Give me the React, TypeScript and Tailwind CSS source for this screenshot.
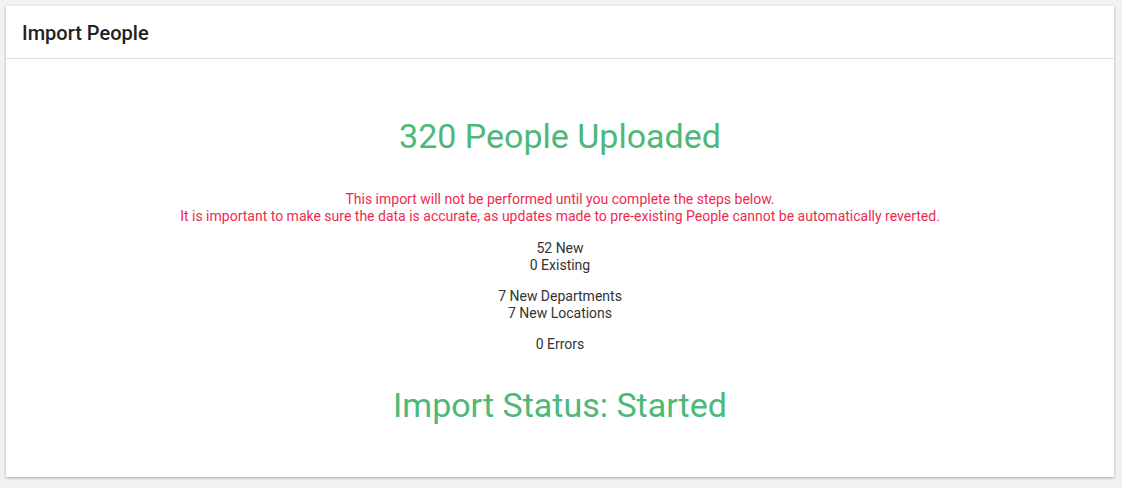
import React from 'react';

const stats: string[][] = [
  ['52 New', '0 Existing'],
  ['7 New Departments', '7 New Locations'],
  ['0 Errors'],
];

export default function App() {
  return (
    <div className="min-h-[488px] bg-[#f2f2f2] pt-[6px] pl-[6px] font-['Roboto',sans-serif]">
      <div className="w-[1108px] h-[471px] bg-white shadow-[0_1px_3px_rgba(0,0,0,0.3)]">
        <div className="h-[53px] flex items-center px-4 border-b border-[#dcdcdc]">
          <h1 className="text-[20px] font-medium text-[#222] pt-[2px]">Import People</h1>
        </div>

        <div className="flex flex-col items-center text-center">
          <h2 className="mt-[57px] text-[34px] leading-[40px] text-[#4db878]">320 People Uploaded</h2>

          <div className="mt-[35px] text-[14px] leading-[17px] text-[#ee2a4f]">
            <p>This import will not be performed until you complete the steps below.</p>
            <p>It is important to make sure the data is accurate, as updates made to pre-existing People cannot be automatically reverted.</p>
          </div>

          <div className="mt-[15px] flex flex-col gap-[14px] text-[14px] leading-[17px] text-[#333]">
            {stats.map((group, i) => (
              <div key={i}>
                {group.map((line) => (
                  <p key={line}>{line}</p>
                ))}
              </div>
            ))}
          </div>

          <h2 className="mt-[32px] text-[34px] leading-[40px] text-[#4db878]">Import Status: Started</h2>
        </div>
      </div>
    </div>
  );
}
